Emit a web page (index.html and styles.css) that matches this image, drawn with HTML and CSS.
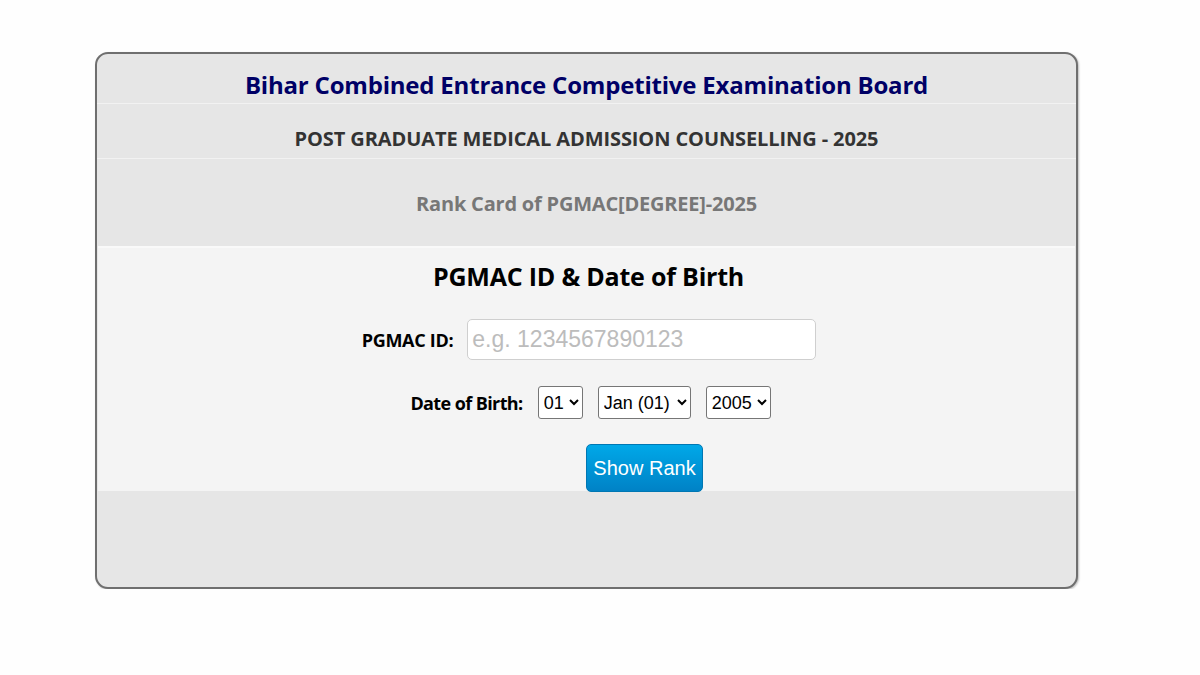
FILE: index.html
```html
<!DOCTYPE html>
<html lang="en">
<head>
    <meta charset="UTF-8">
    <meta name="viewport" content="width=device-width, initial-scale=1.0">
    <title>PGMAC Rank Card</title>
    <link rel="stylesheet" href="styles.css">
</head>
<body>
    <div class="card">
        <div class="card-row board">Bihar Combined Entrance Competitive Examination Board</div>
        <div class="card-row course">POST GRADUATE MEDICAL ADMISSION COUNSELLING - 2025</div>
        <div class="card-row rank-title">Rank Card of PGMAC[DEGREE]-2025</div>

        <form class="login-form" onsubmit="return false;">
            <h2 class="form-title">PGMAC ID &amp; Date of Birth</h2>
            <div class="form-row id-row">
                <label for="pgmacId">PGMAC ID:</label>
                <input type="text" id="pgmacId" class="text-input" placeholder="e.g. 1234567890123">
            </div>
            <div class="form-row dob">
                <label>Date of Birth:</label>
                <select class="dob-select">
                    <option>01</option>
                    <option>02</option>
                    <option>03</option>
                </select>
                <select class="dob-select">
                    <option>Jan (01)</option>
                    <option>Feb (02)</option>
                    <option>Mar (03)</option>
                </select>
                <select class="dob-select">
                    <option>2005</option>
                    <option>2004</option>
                    <option>2003</option>
                </select>
            </div>
            <div class="form-row submit-row">
                <button type="submit" class="show-btn">Show Rank</button>
            </div>
        </form>
    </div>
</body>
</html>
```

FILE: styles.css
```css
* {
    margin: 0;
    padding: 0;
    box-sizing: border-box;
}

body {
    font-family: "Open Sans", "Noto Sans", sans-serif;
    background-color: #fefefe;
}

.card {
    width: 983px;
    height: 537px;
    margin: 52px 0 0 95px;
    background-color: #e6e6e6;
    border: 2px solid #6f6f6f;
    border-radius: 13px;
    box-shadow: 1px 1px 2px rgba(0, 0, 0, 0.25);
    overflow: hidden;
}

.card-row {
    text-align: center;
    font-weight: 700;
    border-bottom: 1px solid #f2f2f2;
}

.board {
    height: 50px;
    padding-top: 16px;
    font-size: 24px;
    line-height: 30px;
    color: #000066;
    letter-spacing: -0.2px;
}

.course {
    height: 55px;
    padding-top: 22px;
    font-size: 20px;
    line-height: 26px;
    color: #333;
    letter-spacing: -0.1px;
}

.rank-title {
    height: 87px;
    padding-top: 32px;
    font-size: 20px;
    line-height: 26px;
    color: #777;
    border-bottom: none;
    letter-spacing: -0.2px;
}

.login-form {
    margin: 0 1px;
    height: 245px;
    background-color: #f4f4f4;
    border-top: 2px solid #f9f9f9;
}

.form-title {
    text-align: center;
    font-size: 25px;
    line-height: 32px;
    padding-top: 12px;
    padding-left: 4px;
    color: #000;
    letter-spacing: -0.2px;
}

.form-row {
    display: flex;
    justify-content: center;
    align-items: center;
    gap: 14px;
}

.form-row label {
    font-size: 18px;
    font-weight: 700;
    color: #000;
    letter-spacing: -0.3px;
}

.id-row {
    margin-top: 27px;
    padding-left: 5px;
}

.text-input {
    width: 349px;
    height: 41px;
    border: 1px solid #cfcfcf;
    border-radius: 5px;
    background-color: #fff;
    padding: 0 4px;
    font-family: "Liberation Sans", Arial, sans-serif;
    font-size: 23px;
    color: #333;
}

.text-input::placeholder {
    color: #bcbcbc;
}

.dob {
    margin-top: 26px;
    gap: 15px;
    padding-left: 8px;
}

.dob label {
    letter-spacing: -0.6px;
}

.dob-select {
    height: 33px;
    border: 1px solid #767676;
    border-radius: 3px;
    background-color: #fff;
    padding: 0 1px;
    font-family: "Liberation Sans", Arial, sans-serif;
    font-size: 18px;
    color: #000;
}

.submit-row {
    margin-top: 25px;
    justify-content: flex-start;
    padding-left: 488px;
}

.show-btn {
    width: 117px;
    height: 48px;
    border: 1px solid #0077b3;
    border-radius: 5px;
    background: linear-gradient(to bottom, #00a8e8, #0082c6);
    color: #fff;
    font-family: "Liberation Sans", Arial, sans-serif;
    font-size: 20px;
    cursor: pointer;
}

.show-btn:hover {
    background: #0077b3;
}
```
